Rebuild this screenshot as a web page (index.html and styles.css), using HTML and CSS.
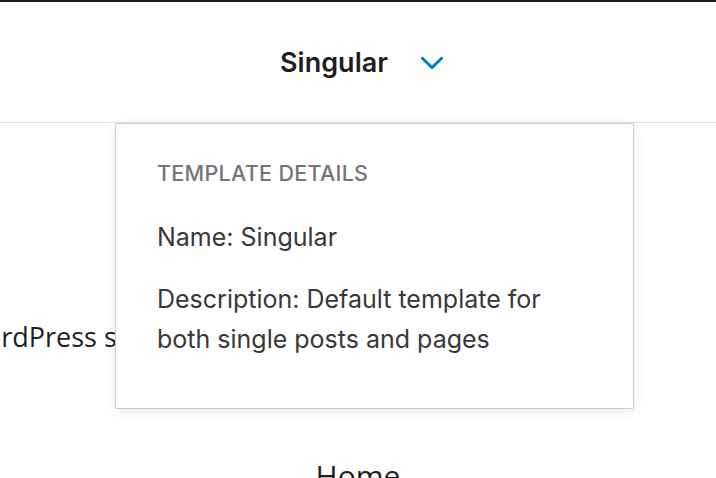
FILE: index.html
```html
<!DOCTYPE html>
<html lang="en">
<head>
  <meta charset="UTF-8" />
  <title>Singular</title>
  <link rel="stylesheet" href="styles.css">
</head>
<body>
  <div class="topbar"></div>
  <header class="header">
    <button class="template-toggle">
      <span class="template-name">Singular</span>
      <svg class="chevron" width="24" height="24" viewBox="0 0 24 24"><path d="M1.5 6.5L12 16.5 22.5 6.5" fill="none" stroke="#007cba" stroke-width="3"/></svg>
    </button>
  </header>

  <main class="content">
    <p class="tagline">WordPress site</p>
    <p class="nav-item">Home</p>
  </main>

  <div class="popover">
    <h2 class="popover-title">Template details</h2>
    <p>Name: Singular</p>
    <p>Description: Default template for both single posts and pages</p>
  </div>
</body>
</html>
```

FILE: styles.css
```css
body { margin: 0; font-family: Inter, "Noto Sans", sans-serif; background: #fff; color: #1e1e1e; overflow: hidden; height: 478px; position: relative; }
.topbar { height: 2px; background: #1e1e1e; }
.header { height: 120px; border-bottom: 1px solid #e0e0e0; display: flex; justify-content: center; align-items: center; }
.template-toggle { display: flex; align-items: center; gap: 32px; background: none; border: 0; padding: 0 0 0 8px; font-family: inherit; cursor: pointer; }
.template-name { font-size: 27px; font-weight: 600; color: #1e1e1e; }
.chevron { display: block; margin-top: 2px; }

.content { display: flex; flex-direction: column; align-items: center; }
.tagline { align-self: flex-start; margin: 195px 0 0 -40px; font-family: "Open Sans", sans-serif; font-size: 27px; color: #1e1e1e; }
.nav-item { margin: 100px 0 0; font-family: "Open Sans", sans-serif; font-size: 30px; color: #1e1e1e; }

.popover { position: absolute; left: 115px; top: 123px; width: 436px; height: 240px; padding: 22px 40px 22px 41px; border: 1px solid #ccc; border-radius: 2px; background: #fff; box-shadow: 0 3px 14px rgba(0,0,0,0.08); color: #383838; font-size: 25px; }
.popover-title { margin: 14px 0 31px; font-size: 21.5px; font-weight: 500; text-transform: uppercase; color: #757575; letter-spacing: 0.3px; }
.popover p { margin: 0 0 22px; line-height: 40px; }
```
